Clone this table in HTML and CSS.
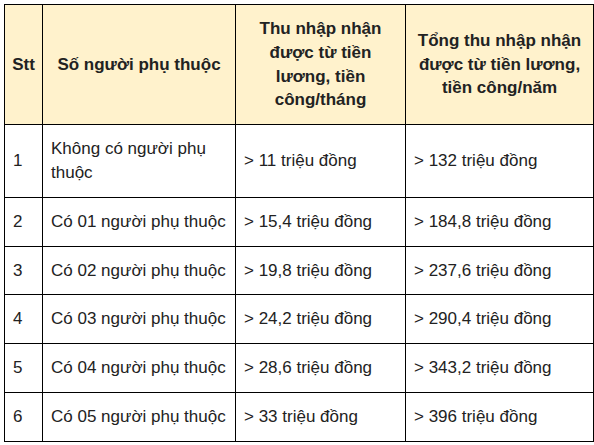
FILE: index.html
```html
<!DOCTYPE html>
<html lang="vi">
<head>
<meta charset="utf-8">
<link rel="stylesheet" href="styles.css">
</head>
<body>
<table class="tax">
<colgroup>
<col class="c1"><col class="c2"><col class="c3"><col class="c4">
</colgroup>
<thead>
<tr>
<th>Stt</th>
<th>Số người phụ thuộc</th>
<th>Thu nhập nhận<br>được từ tiền<br>lương, tiền<br>công/tháng</th>
<th>Tổng thu nhập nhận<br>được từ tiền lương,<br>tiền công/năm</th>
</tr>
</thead>
<tbody>
<tr><td>1</td><td>Không có người phụ thuộc</td><td>&gt; 11 triệu đồng</td><td>&gt; 132 triệu đồng</td></tr>
<tr><td>2</td><td>Có 01 người phụ thuộc</td><td>&gt; 15,4 triệu đồng</td><td>&gt; 184,8 triệu đồng</td></tr>
<tr><td>3</td><td>Có 02 người phụ thuộc</td><td>&gt; 19,8 triệu đồng</td><td>&gt; 237,6 triệu đồng</td></tr>
<tr><td>4</td><td>Có 03 người phụ thuộc</td><td>&gt; 24,2 triệu đồng</td><td>&gt; 290,4 triệu đồng</td></tr>
<tr><td>5</td><td>Có 04 người phụ thuộc</td><td>&gt; 28,6 triệu đồng</td><td>&gt; 343,2 triệu đồng</td></tr>
<tr><td>6</td><td>Có 05 người phụ thuộc</td><td>&gt; 33 triệu đồng</td><td>&gt; 396 triệu đồng</td></tr>
</tbody>
</table>
</body>
</html>
```
FILE: styles.css
```css
html, body {
  margin: 0;
  padding: 0;
  background: #fff;
}
body {
  padding: 4px;
  font-family: "Liberation Sans", Arial, sans-serif;
  font-size: 17px;
  color: #222;
}
.tax {
  border-collapse: collapse;
  table-layout: fixed;
  width: 589px;
}
.c1 { width: 38px; }
.c2 { width: 193px; }
.c3 { width: 170px; }
.c4 { width: 188px; }
.tax th, .tax td {
  border: 1px solid #000;
  padding: 12px 8px;
  line-height: 1.4;
  vertical-align: middle;
}
.tax th {
  background: #fff2cc;
  font-weight: bold;
  text-align: center;
  padding: 12px 4px;
}
.tax td {
  text-align: left;
}
```
